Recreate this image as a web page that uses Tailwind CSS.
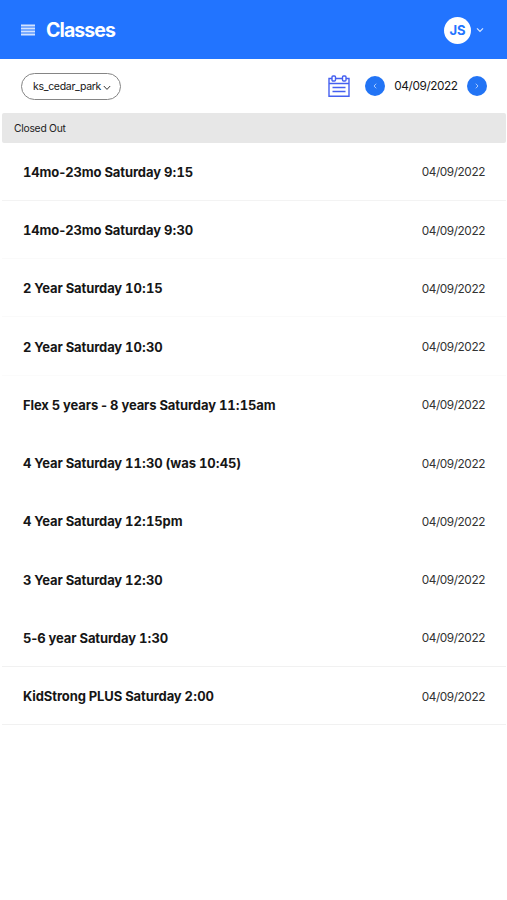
<!DOCTYPE html>
<html lang="en">
<head>
    <meta charset="UTF-8">
    <meta name="viewport" content="width=device-width, initial-scale=1.0">
    <title>Classes</title>
    <script src="https://cdn.jsdelivr.net/npm/@tailwindcss/browser@4"></script>
</head>
<body class="bg-white font-['Inter','Liberation_Sans',sans-serif] text-[#161616]">

<!-- Header -->
<header class="flex items-center justify-between h-[59px] bg-[#2274ff] pl-[21px] pr-[23px] text-white">
    <div class="flex items-center">
        <svg class="w-[14px] h-[12px] mt-px" viewBox="0 0 14 12" fill="none" stroke="#d3e3ff" stroke-width="1.8">
            <path d="M0 1.5h14M0 4.5h14M0 7.5h14M0 10.5h14"/>
        </svg>
        <h1 class="ml-[11px] text-[19.5px] leading-6 font-bold tracking-[-0.9px]">Classes</h1>
    </div>
    <button class="flex items-center gap-[5px] mt-px">
        <span class="flex items-center justify-center w-[27px] h-[27px] rounded-full bg-white pt-px text-[#2274ff] text-[13px] font-bold">JS</span>
        <svg class="w-[8px] h-[6px]" viewBox="0 0 8 6" fill="none" stroke="#d9e7ff" stroke-width="1.2">
            <path d="M1 1.3l3 3 3-3"/>
        </svg>
    </button>
</header>

<!-- Toolbar -->
<div class="flex items-center justify-between h-[54px] pl-[21px] pr-5">
    <button class="flex items-center justify-center gap-[2px] w-[100px] h-[27px] rounded-full border border-[#858585] pl-0.5 pt-px text-[10.5px] tracking-[-0.3px]">
        <span>ks_cedar_park</span>
        <svg class="w-[8px] h-[6px] mt-0.5" viewBox="0 0 8 6" fill="none" stroke="#333" stroke-width="1">
            <path d="M.8 1l3.2 3.4L7.2 1"/>
        </svg>
    </button>
    <div class="flex items-center">
        <svg class="w-[22px] h-[22px]" viewBox="0 0 22 22" fill="none" stroke="#4560f0" stroke-width="1.4">
            <path d="M4 3.5H1v17.8h20V3.5h-3M7.5 3.5h7M1 8.5h20M4.5 12.5h13M4.5 16.5h13"/>
            <rect x="4" y="1" width="3.5" height="5" rx="1"/>
            <rect x="14.5" y="1" width="3.5" height="5" rx="1"/>
        </svg>
        <button class="flex items-center justify-center ml-[15px] w-5 h-5 rounded-full bg-[#2274f5]">
            <svg class="w-1 h-[6px]" viewBox="0 0 4 6" fill="none" stroke="#a9caff" stroke-width="1"><path d="M3.2.7L1 3l2.2 2.3"/></svg>
        </button>
        <span class="w-[82px] pt-0.5 text-center text-[11.8px] tracking-[-0.4px] whitespace-nowrap">04/09/2022</span>
        <button class="flex items-center justify-center w-5 h-5 rounded-full bg-[#2274f5]">
            <svg class="w-1 h-[6px]" viewBox="0 0 4 6" fill="none" stroke="#a9caff" stroke-width="1"><path d="M.8.7L3 3 .8 5.3"/></svg>
        </button>
    </div>
</div>

<!-- Class list -->
<main class="ml-[2px] mr-px">
    <h2 class="flex items-center h-[29.5px] rounded-xs bg-[#e7e7e7] pl-3 pt-px text-[10.3px] tracking-[-0.25px] text-[#222]">Closed Out</h2>
    <ul id="class-list"></ul>
</main>

<script>
    const date = '04/09/2022';
    const classes = [
        { name: '14mo-23mo Saturday 9:15', line: 'border-[#f3f3f3]' },
        { name: '14mo-23mo Saturday 9:30', line: 'border-[#fafafa]' },
        { name: '2 Year Saturday 10:15', line: 'border-[#fafafa]' },
        { name: '2 Year Saturday 10:30', line: 'border-[#fbfbfb]' },
        { name: 'Flex 5 years - 8 years Saturday 11:15am', line: 'border-transparent' },
        { name: '4 Year Saturday 11:30 (was 10:45)', line: 'border-transparent' },
        { name: '4 Year Saturday 12:15pm', line: 'border-transparent' },
        { name: '3 Year Saturday 12:30', line: 'border-transparent' },
        { name: '5-6 year Saturday 1:30', line: 'border-[#f1f1f1]' },
        { name: 'KidStrong PLUS Saturday 2:00', line: 'border-[#f1f1f1]' },
    ];

    // Only the digits are tabular, hyphens and brackets keep their own width
    const tabular = text => text.replace(/\d+/g, '<span class="tabular-nums">$&</span>');

    document.getElementById('class-list').innerHTML = classes.map(item => `
        <li class="flex items-center justify-between h-[58.25px] border-b ${item.line} pt-[3px] pl-[21px] pr-[21px]">
            <p class="text-[13px] font-bold tracking-[-0.1px]">${tabular(item.name)}</p>
            <p class="pt-px text-[11.8px] tracking-[-0.4px] text-[#333]">${date}</p>
        </li>
    `).join('');
</script>

</body>
</html>
